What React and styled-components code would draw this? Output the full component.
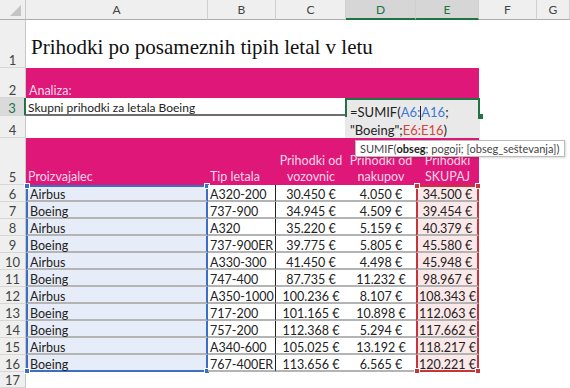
import React from 'react';
import styled, { createGlobalStyle, css } from 'styled-components';

const GlobalStyle = createGlobalStyle`
  *, *::before, *::after { box-sizing: border-box; }
  html, body { margin: 0; padding: 0; background: #fff; }
  body { font-family: Lato, "Liberation Sans", sans-serif; }
`;

const PINK = '#de1779';
const GREEN = '#217346';
const BLUE = '#3b6fc4';
const RED = '#c8343c';

const Sheet = styled.div`
  position: relative;
  display: grid;
  grid-template-columns: 26px 182px 68px 70px 70px 63px 58px 1fr;
  grid-template-rows: 20px 48px 30px 18px 22px 47px repeat(11, 17px) 1fr;
  width: 570px;
  height: 388px;
  overflow: hidden;
  font-family: Lato, "Liberation Sans", sans-serif;
  font-size: 12.5px;
  color: #222;
`;

const Corner = styled.div`
  background: #efefef;
  border-right: 1px solid #c8c8c8;
  border-bottom: 1px solid #ababab;
  position: relative;
  &::after {
    content: '';
    position: absolute;
    right: 4px;
    bottom: 3px;
    border-left: 11px solid transparent;
    border-bottom: 11px solid #c4c4c4;
  }
`;

const ColHead = styled.div`
  display: flex;
  align-items: center;
  justify-content: center;
  background: ${p => (p.$active ? '#d6d6d6' : '#efefef')};
  color: ${p => (p.$active ? GREEN : '#444')};
  border-right: 1px solid #d0d0d0;
  border-bottom: ${p => (p.$active ? `2px solid ${GREEN}` : '1px solid #ababab')};
  font-size: 12px;
`;

const RowHead = styled.div`
  display: flex;
  align-items: flex-end;
  justify-content: center;
  background: ${p => (p.$active ? '#dadada' : '#efefef')};
  color: ${p => (p.$active ? GREEN : '#444')};
  border-right: ${p => (p.$active ? `2px solid ${GREEN}` : '1px solid #c8c8c8')};
  border-bottom: 1px solid #d6d6d6;
  font-size: 13px;
  line-height: 13px;
`;

const Blank = styled.div`
  grid-column: span ${p => p.$span || 1};
`;

const Title = styled.div`
  grid-column: span 7;
  display: flex;
  align-items: center;
  padding: 6px 0 0 5px;
  font-family: "Liberation Serif", "DejaVu Serif", serif;
  font-size: 21px;
  color: #111;
`;

const Band = styled.div`
  grid-column: span ${p => p.$span || 1};
  background: ${PINK};
  color: #fbd6e8;
  display: flex;
  align-items: flex-end;
  padding: 0 0 0 3px;
`;

const Caption = styled.div`
  grid-column: span 3;
  display: flex;
  align-items: flex-end;
  padding: 0 0 0 2px;
  font-size: 12px;
  line-height: 12px;
  border-bottom: 2px solid #6e6e6e;
`;

const Editing = styled.div`
  grid-column: span 2;
  position: relative;
  z-index: 2;
`;

const EditBox = styled.div`
  position: absolute;
  left: -1px;
  top: 0;
  right: -1px;
  height: 40px;
  background: #e9e9e9;
  border: 2px solid ${GREEN};
  border-bottom: none;
  padding: 3px 0 0 3px;
  font-size: 13px;
  line-height: 18px;
  color: #222;
  white-space: nowrap;
  &::after {
    content: '';
    position: absolute;
    left: -2px;
    right: -2px;
    top: 17px;
    bottom: 0;
    border-left: 2px solid #e9e9e9;
    border-right: 2px solid #e9e9e9;
  }
`;

const FillHandle = styled.span`
  position: absolute;
  right: -5px;
  top: 14px;
  width: 5px;
  height: 5px;
  background: ${GREEN};
  z-index: 1;
`;

const Ref = styled.span`
  color: ${p => p.$color};
`;

const Caret = styled.span`
  display: inline-block;
  width: 1px;
  height: 14px;
  background: #222;
  vertical-align: -3px;
`;

const HeadCell = styled.div`
  background: ${PINK};
  color: #fbd6e8;
  display: flex;
  flex-direction: column;
  justify-content: flex-end;
  align-items: ${p => (p.$center ? 'center' : 'flex-start')};
  text-align: ${p => (p.$center ? 'center' : 'left')};
  padding: 0 0 0 ${p => (p.$center ? 0 : 2)}px;
  line-height: 16px;
`;

const Cell = styled.div`
  position: relative;
  display: flex;
  align-items: flex-end;
  justify-content: ${p => (p.$center ? 'center' : 'flex-start')};
  padding-left: ${p => (p.$center ? 0 : 2)}px;
  line-height: 11px;
  white-space: nowrap;
  border-bottom: 2px solid #b4b4b4;
  background: ${p => p.$fill || '#fff'};
  ${p => p.$rule && css`border-right: 1px solid #222;`}
  ${p =>
    p.$frame &&
    css`
      border-left: 2px solid ${p.$frame};
      border-right: 2px solid ${p.$frame};
    `}
  ${p => p.$frame && p.$first && css`border-top: 2px solid ${p.$frame};`}
  ${p => p.$frame && p.$last && css`border-bottom: 2px solid ${p.$frame};`}
`;

const Handle = styled.span`
  position: absolute;
  width: 6px;
  height: 6px;
  background: ${p => p.$color};
  border: 1px solid #fff;
  ${p => (p.$top ? 'top: -4px;' : 'bottom: -4px;')}
  ${p => (p.$left ? 'left: -4px;' : 'right: -4px;')}
`;

const Tip = styled.div`
  position: absolute;
  left: 355px;
  top: 140px;
  z-index: 3;
  padding: 0 5px 0 4px;
  height: 17px;
  line-height: 15px;
  background: #fff;
  border: 1px solid #bcbcbc;
  box-shadow: 1px 1px 2px rgba(0, 0, 0, 0.15);
  font-size: 11px;
  color: #444;
  white-space: nowrap;
  b { color: #222; }
`;

const cols = ['A', 'B', 'C', 'D', 'E', 'F', 'G'];

const rows = [
  ['Airbus', 'A320-200', '30.450 €', '4.050 €', '34.500 €'],
  ['Boeing', '737-900', '34.945 €', '4.509 €', '39.454 €'],
  ['Airbus', 'A320', '35.220 €', '5.159 €', '40.379 €'],
  ['Boeing', '737-900ER', '39.775 €', '5.805 €', '45.580 €'],
  ['Airbus', 'A330-300', '41.450 €', '4.498 €', '45.948 €'],
  ['Boeing', '747-400', '87.735 €', '11.232 €', '98.967 €'],
  ['Airbus', 'A350-1000', '100.236 €', '8.107 €', '108.343 €'],
  ['Boeing', '717-200', '101.165 €', '10.898 €', '112.063 €'],
  ['Boeing', '757-200', '112.368 €', '5.294 €', '117.662 €'],
  ['Airbus', 'A340-600', '105.025 €', '13.192 €', '118.217 €'],
  ['Boeing', '767-400ER', '113.656 €', '6.565 €', '120.221 €'],
];

function Corners({ color, first, last }) {
  return (
    <>
      {first && <Handle $color={color} $top $left />}
      {first && <Handle $color={color} $top />}
      {last && <Handle $color={color} $left />}
      {last && <Handle $color={color} />}
    </>
  );
}

export default function App() {
  const n = rows.length;
  return (
    <>
      <GlobalStyle />
      <Sheet>
        <Corner />
        {cols.map(c => (
          <ColHead key={c} $active={c === 'D' || c === 'E'}>{c}</ColHead>
        ))}

        <RowHead>1</RowHead>
        <Title>Prihodki po posameznih tipih letal v letu</Title>

        <RowHead>2</RowHead>
        <Band $span={5}>Analiza:</Band>
        <Blank $span={2} />

        <RowHead $active>3</RowHead>
        <Caption>Skupni prihodki za letala Boeing</Caption>
        <Editing>
          <EditBox>
            =SUMIF(<Ref $color="#3c78d8">A6:<Caret />A16</Ref>;
            <br />
            "Boeing";<Ref $color="#d0453f">E6:E16</Ref>)
            <FillHandle />
          </EditBox>
        </Editing>
        <Blank $span={2} />

        <RowHead>4</RowHead>
        <Blank $span={7} />

        <RowHead>5</RowHead>
        <HeadCell>Proizvajalec</HeadCell>
        <HeadCell>Tip letala</HeadCell>
        <HeadCell $center>Prihodki od<br />vozovnic</HeadCell>
        <HeadCell $center>Prihodki od<br />nakupov</HeadCell>
        <HeadCell $center>Prihodki<br />SKUPAJ</HeadCell>
        <Blank $span={2} />

        {rows.map((r, i) => {
          const first = i === 0;
          const last = i === n - 1;
          return (
            <React.Fragment key={i}>
              <RowHead>{i + 6}</RowHead>
              <Cell $fill="#e7edf8" $frame={BLUE} $first={first} $last={last}>
                {r[0]}
                <Corners color={BLUE} first={first} last={last} />
              </Cell>
              <Cell $rule>{r[1]}</Cell>
              <Cell $center>{r[2]}</Cell>
              <Cell $center>{r[3]}</Cell>
              <Cell $center $fill="#fbe8e9" $frame={RED} $first={first} $last={last}>
                {r[4]}
                <Corners color={RED} first={first} last={last} />
              </Cell>
              <Blank $span={2} />
            </React.Fragment>
          );
        })}

        <RowHead>17</RowHead>
        <Blank $span={7} />

        <Tip>SUMIF(<b>obseg</b>; pogoji; [obseg_seštevanja])</Tip>
      </Sheet>
    </>
  );
}
